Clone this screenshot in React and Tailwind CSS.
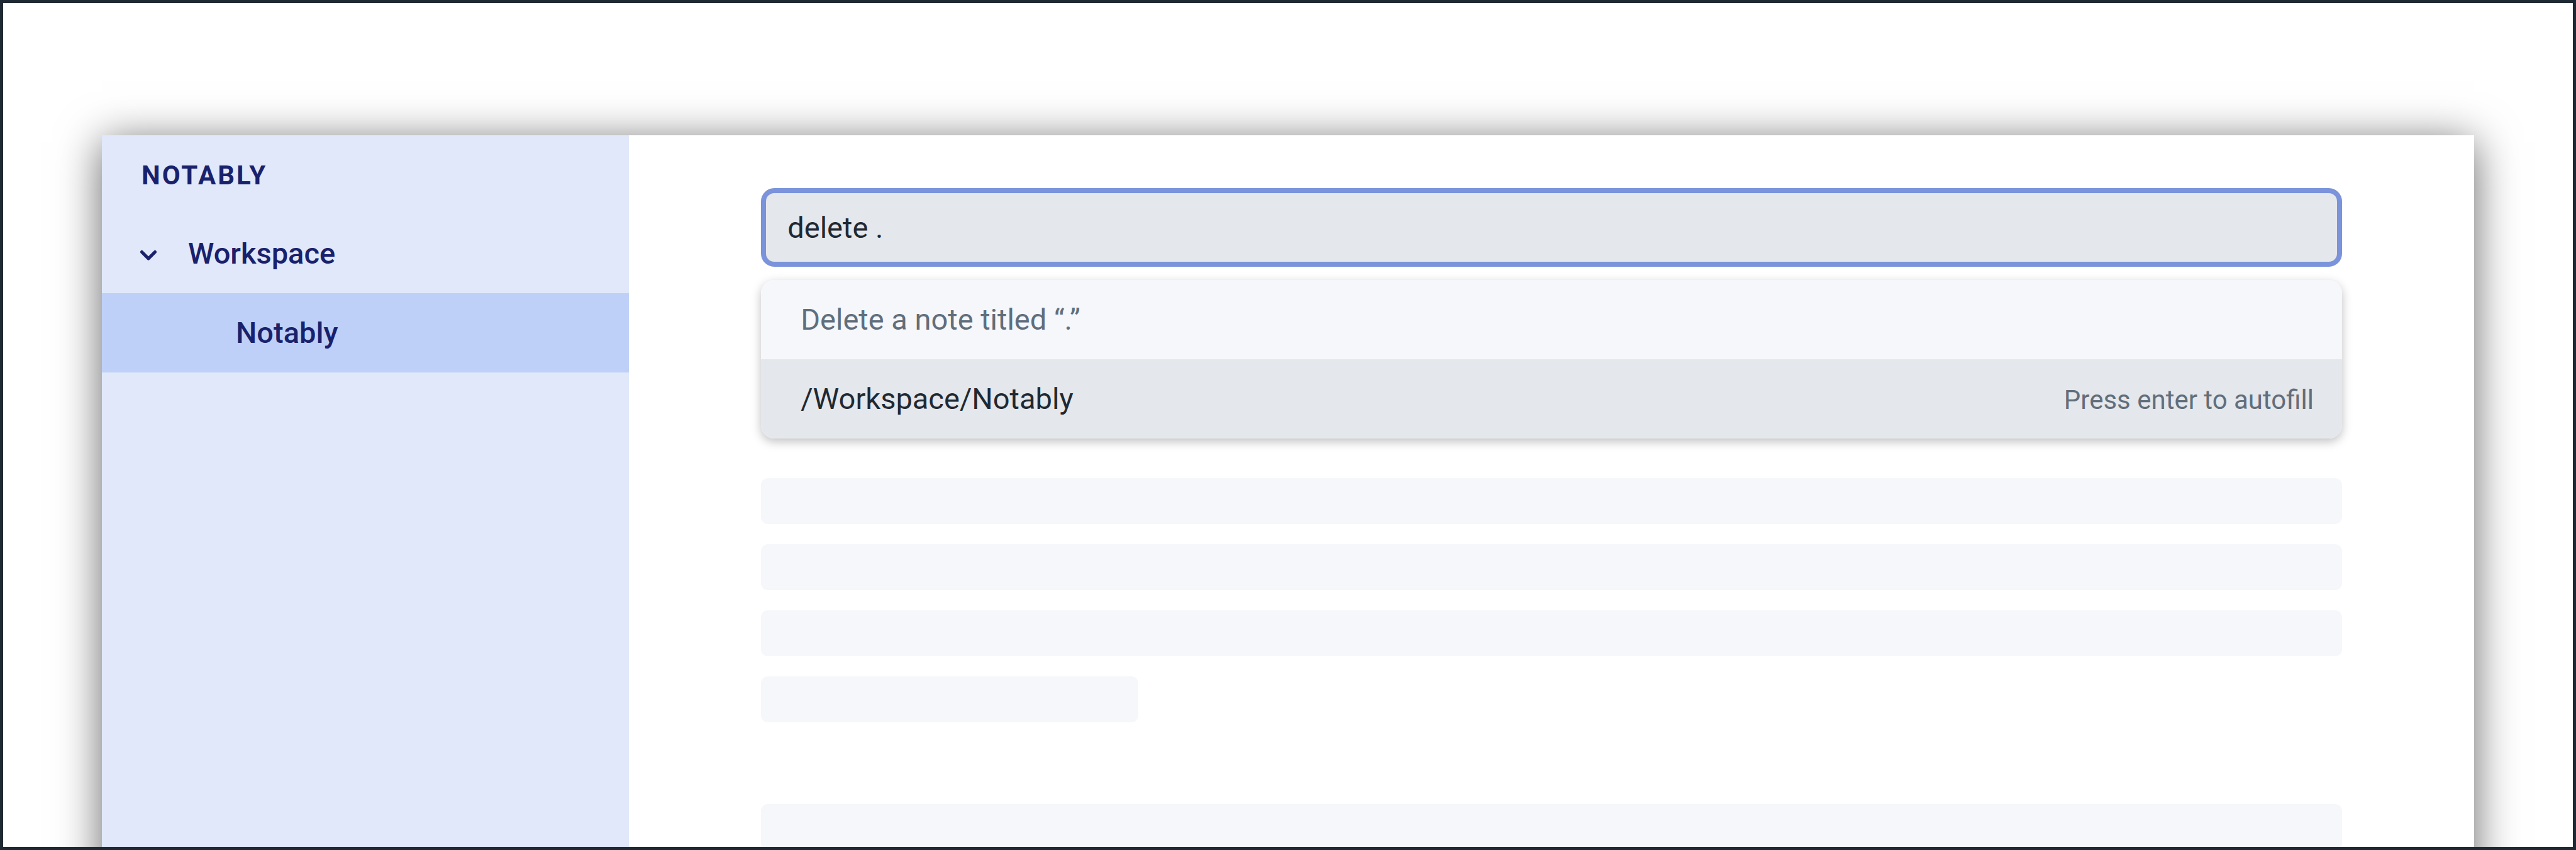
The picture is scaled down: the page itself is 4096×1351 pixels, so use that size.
import { useState } from "react";

function Chevron() {
  return (
    <svg
      viewBox="0 0 24 24"
      fill="none"
      stroke="currentColor"
      strokeWidth="3"
      strokeLinecap="round"
      strokeLinejoin="round"
      className="size-[42px] shrink-0"
      aria-hidden="true"
    >
      <path d="M6 10l6 6 6-6" />
    </svg>
  );
}

function Sidebar() {
  return (
    <aside className="w-2/9 shrink-0 bg-[#E0E8F9] text-[#19216C]">
      <h1 className="flex h-[126px] items-center pl-[63px] text-[42px] font-bold tracking-[3px]">
        NOTABLY
      </h1>
      <nav aria-label="Notes" className="text-[47px] font-medium">
        <button
          type="button"
          aria-expanded="true"
          className="flex h-[125px] w-full items-center gap-[42px] pl-[53px] text-left"
        >
          <Chevron />
          Workspace
        </button>
        <button
          type="button"
          aria-current="page"
          className="flex h-[126px] w-full items-center bg-[#BED0F7] pl-[213px] text-left"
        >
          Notably
        </button>
      </nav>
    </aside>
  );
}

function CommandBar() {
  const [command, setCommand] = useState("delete .");
  return (
    <div className="flex flex-col gap-[21px] text-[47px]">
      <input
        type="text"
        aria-label="Command"
        value={command}
        onChange={(event) => setCommand(event.target.value)}
        className="h-[125px] w-full rounded-[21px] border-8 border-[#7B93DB] bg-[#E4E7EB] px-[34px] text-[#1F2933] outline-none"
      />
      <div className="overflow-hidden rounded-[21px] shadow-[0_5px_16px_rgba(0,0,0,0.25)]">
        <p className="flex h-[126px] items-center bg-[#F5F7FA] pl-[63px] text-[#616E7C]">
          Delete a note titled “.”
        </p>
        <button
          type="button"
          className="flex h-[126px] w-full items-center bg-[#E4E7EB] pr-[45px] pl-[63px] text-left"
        >
          <span className="flex flex-1 items-baseline justify-between">
            <span className="text-[#1F2933]">/Workspace/Notably</span>
            <span className="text-[42px] text-[#616E7C]">Press enter to autofill</span>
          </span>
        </button>
      </div>
    </div>
  );
}

function Line({ className = "w-full" }) {
  return <div className={`h-[73px] shrink-0 rounded-[11px] bg-[#F5F7FA] ${className}`} />;
}

export default function App() {
  return (
    <div className="flex h-screen overflow-hidden border-5 border-[#1F2933] bg-white px-[157px] pt-[210px] font-[Roboto,sans-serif]">
      <div className="flex h-[150vh] flex-1 shadow-[0_10px_65px_rgba(0,0,0,0.6)]">
        <Sidebar />
        <main className="flex flex-1 flex-col bg-white px-[210px] pt-[84px]">
          <CommandBar />
          <div className="mt-[63px] flex flex-col gap-8">
            <Line />
            <Line />
            <Line />
            <Line className="w-[600px]" />
          </div>
          <div className="mt-[130px] flex flex-col gap-8">
            <Line />
            <Line />
          </div>
        </main>
      </div>
    </div>
  );
}
